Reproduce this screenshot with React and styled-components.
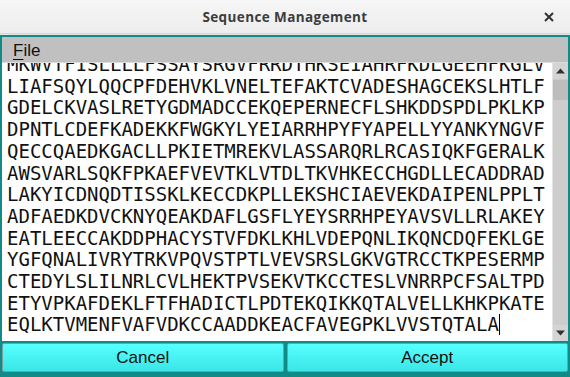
import React from 'react';
import styled, { createGlobalStyle } from 'styled-components';

const GlobalStyle = createGlobalStyle`
  html, body {
    margin: 0;
    padding: 0;
    background: #f2f2f2;
  }
`;

const SEQUENCE = [
  'MKWVTFISLLLLFSSAYSRGVFRRDTHKSEIAHRFKDLGEEHFKGLV',
  'LIAFSQYLQQCPFDEHVKLVNELTEFAKTCVADESHAGCEKSLHTLF',
  'GDELCKVASLRETYGDMADCCEKQEPERNECFLSHKDDSPDLPKLKP',
  'DPNTLCDEFKADEKKFWGKYLYEIARRHPYFYAPELLYYANKYNGVF',
  'QECCQAEDKGACLLPKIETMREKVLASSARQRLRCASIQKFGERALK',
  'AWSVARLSQKFPKAEFVEVTKLVTDLTKVHKECCHGDLLECADDRAD',
  'LAKYICDNQDTISSKLKECCDKPLLEKSHCIAEVEKDAIPENLPPLT',
  'ADFAEDKDVCKNYQEAKDAFLGSFLYEYSRRHPEYAVSVLLRLAKEY',
  'EATLEECCAKDDPHACYSTVFDKLKHLVDEPQNLIKQNCDQFEKLGE',
  'YGFQNALIVRYTRKVPQVSTPTLVEVSRSLGKVGTRCCTKPESERMP',
  'CTEDYLSLILNRLCVLHEKTPVSEKVTKCCTESLVNRRPCFSALTPD',
  'ETYVPKAFDEKLFTFHADICTLPDTEKQIKKQTALVELLKHKPKATE',
  'EQLKTVMENFVAFVDKCCAADDKEACFAVEGPKLVVSTQTALA',
];

const Window = styled.div`
  width: 570px;
  height: 377px;
  display: flex;
  flex-direction: column;
  overflow: hidden;
`;

const TitleBar = styled.div`
  height: 34px;
  flex: none;
  display: grid;
  grid-template-columns: 40px 1fr 40px;
  align-items: center;
  padding-top: 1px;
  background: linear-gradient(#f6f6f6, #ededed);
  border-bottom: 1px solid #d6d6d6;
  box-sizing: border-box;
`;

const Title = styled.div`
  grid-column: 2;
  text-align: center;
  font-family: 'Open Sans', 'Noto Sans', sans-serif;
  font-weight: 700;
  font-size: 13.5px;
  letter-spacing: 0.4px;
  color: #3a3d3e;
`;

const CloseButton = styled.div`
  grid-column: 3;
  display: flex;
  justify-content: center;
  padding-right: 2px;
  color: #2e3436;
`;

const Frame = styled.div`
  flex: 1;
  display: flex;
  flex-direction: column;
  background: #128a88;
  padding: 2px 2px 5px 2px;
  border-top: 1px solid #e6e6e6;
  min-height: 0;
`;

const MenuBar = styled.div`
  height: 26px;
  flex: none;
  display: flex;
  align-items: center;
  padding-left: 11px;
  padding-top: 3px;
  box-sizing: border-box;
  background: #c0c0c0;
  border-bottom: 1px solid #dcdcdc;
`;

const MenuItem = styled.span`
  font-family: 'Liberation Sans', Arial, sans-serif;
  font-size: 17px;
  color: #111;

  &::first-letter {
    text-decoration: underline;
    text-underline-offset: 3px;
  }
`;

const EditorRow = styled.div`
  flex: 1;
  display: flex;
  min-height: 0;
  background: #ffffff;
`;

const TextPane = styled.div`
  flex: 1;
  overflow: hidden;
  padding-left: 5px;
  font-family: 'DejaVu Sans Mono', 'Liberation Mono', monospace;
  font-size: 19px;
  line-height: 21.7px;
  color: #111;
`;

const TextBody = styled.div`
  margin-top: -9px;
`;

const Line = styled.div`
  white-space: pre;
`;

const Caret = styled.span`
  display: inline-block;
  width: 1px;
  height: 21px;
  background: #000;
  vertical-align: top;
`;

const ScrollBar = styled.div`
  width: 15px;
  flex: none;
  display: flex;
  flex-direction: column;
  background: #cdcdcd;
  border-left: 1px solid #e4e4e4;
`;

const Arrow = styled.div`
  height: 16px;
  flex: none;
  display: flex;
  align-items: center;
  justify-content: center;
  background: #d4d4d4;
`;

const Thumb = styled.div`
  height: 20px;
  flex: none;
  background: #bdbdbd;
  border-top: 1px solid #c9c9c9;
`;

const Track = styled.div`
  flex: 1;
`;

const ButtonRow = styled.div`
  flex: none;
  display: grid;
  grid-template-columns: 1fr 1fr;
  gap: 3px;
  padding-top: 2px;
`;

const Button = styled.button`
  height: 29px;
  margin: 0;
  padding: 0;
  border: 1px solid #7f9c9c;
  border-radius: 2px;
  background: linear-gradient(#58ffff, #3ae6e6);
  font-family: 'Liberation Sans', Arial, sans-serif;
  font-size: 17px;
  color: #111;
`;

const Triangle = ({ up }) => (
  <svg width="9" height="6" viewBox="0 0 9 6">
    <path d={up ? 'M0 5.5 L4.5 0.5 L9 5.5 Z' : 'M0 0.5 L4.5 5.5 L9 0.5 Z'} fill="#333" />
  </svg>
);

export default function App() {
  return (
    <>
      <GlobalStyle />
      <Window>
        <TitleBar>
          <Title>Sequence Management</Title>
          <CloseButton>
            <svg width="10" height="10" viewBox="0 0 10 10">
              <path d="M1 1 L9 9 M9 1 L1 9" stroke="#2e3436" strokeWidth="2" />
            </svg>
          </CloseButton>
        </TitleBar>
        <Frame>
          <MenuBar>
            <MenuItem>File</MenuItem>
          </MenuBar>
          <EditorRow>
            <TextPane>
              <TextBody>
                {SEQUENCE.map((line, i) => (
                  <Line key={i}>
                    {line}
                    {i === SEQUENCE.length - 1 && <Caret />}
                  </Line>
                ))}
              </TextBody>
            </TextPane>
            <ScrollBar>
              <Arrow><Triangle up /></Arrow>
              <Thumb />
              <Track />
              <Arrow><Triangle /></Arrow>
            </ScrollBar>
          </EditorRow>
          <ButtonRow>
            <Button>Cancel</Button>
            <Button>Accept</Button>
          </ButtonRow>
        </Frame>
      </Window>
    </>
  );
}
